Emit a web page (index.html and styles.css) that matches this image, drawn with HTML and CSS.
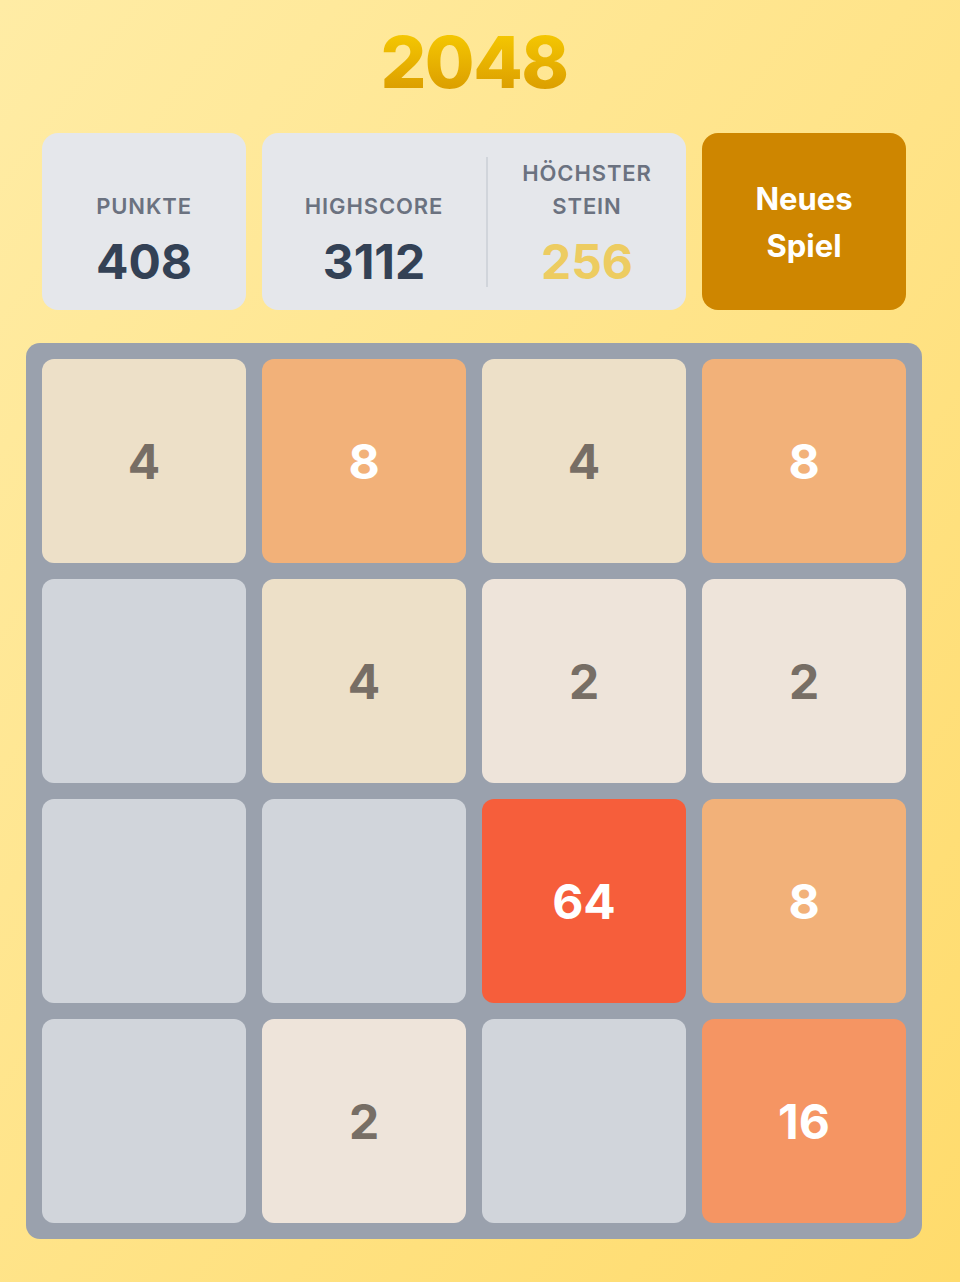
FILE: index.html
```html
<!DOCTYPE html>
<html lang="de">
<head>
    <meta charset="UTF-8">
    <meta name="viewport" content="width=device-width, initial-scale=1.0">
    <title>2048</title>
    <link rel="stylesheet" href="styles.css">
</head>
<body>
    <div class="game">
        <h1 class="title">2048</h1>

        <div class="stats">
            <div class="stat-box">
                <div class="stat">
                    <div class="stat-label">Punkte</div>
                    <div class="stat-value">408</div>
                </div>
            </div>

            <div class="stat-box stat-box-wide">
                <div class="stat">
                    <div class="stat-label">Highscore</div>
                    <div class="stat-value">3112</div>
                </div>
                <div class="divider"></div>
                <div class="stat">
                    <div class="stat-label">Höchster Stein</div>
                    <div class="stat-value best-tile">256</div>
                </div>
            </div>

            <button class="new-game" type="button">Neues Spiel</button>
        </div>

        <div class="board">
            <div class="tile t4">4</div>
            <div class="tile t8">8</div>
            <div class="tile t4">4</div>
            <div class="tile t8">8</div>

            <div class="tile"></div>
            <div class="tile t4">4</div>
            <div class="tile t2">2</div>
            <div class="tile t2">2</div>

            <div class="tile"></div>
            <div class="tile"></div>
            <div class="tile t64">64</div>
            <div class="tile t8">8</div>

            <div class="tile"></div>
            <div class="tile t2">2</div>
            <div class="tile"></div>
            <div class="tile t16">16</div>
        </div>
    </div>
</body>
</html>
```

FILE: styles.css
```css
html,
body {
    margin: 0;
    min-height: 100%;
}

body {
    min-height: 1282px;
    font-family: Inter, "Noto Sans", sans-serif;
    background: linear-gradient(to bottom right, #ffeca5, #ffdb6c);
}

.game {
    width: 896px;
    margin-left: 26px;
    padding-top: 26px;
}

.title {
    margin: 0 0 35px;
    font-size: 72px;
    line-height: 72px;
    font-weight: 800;
    letter-spacing: -1.5px;
    text-align: center;
    background: linear-gradient(to bottom, #f8cd02, #d89800);
    -webkit-background-clip: text;
    background-clip: text;
    color: transparent;
}

/* score row */
.stats {
    display: grid;
    grid-template-columns: 204px 424px 204px;
    gap: 16px;
    padding: 0 16px;
    height: 177px;
}

.stat-box {
    display: flex;
    align-items: center;
    justify-content: center;
    background: #e5e7eb;
    border-radius: 16px;
}

.stat-box-wide {
    display: grid;
    grid-template-columns: 224px 2px 1fr;
    align-items: center;
}

.stat {
    display: flex;
    flex-direction: column;
    align-items: center;
}

.stat-label {
    display: flex;
    align-items: flex-end;
    justify-content: center;
    min-height: 66px;
    width: 150px;
    font-size: 22px;
    line-height: 33px;
    font-weight: 600;
    letter-spacing: 0.04em;
    text-transform: uppercase;
    text-align: center;
    color: #6b7280;
}

.stat-value {
    margin-top: 15px;
    font-size: 48px;
    line-height: 48px;
    font-weight: 700;
    color: #334155;
}

.best-tile {
    color: #edcc61;
}

.divider {
    width: 2px;
    height: 130px;
    background: #d1d5db;
}

.new-game {
    padding: 0 24px;
    border: none;
    border-radius: 16px;
    background: #ce8600;
    color: #fff;
    font-family: inherit;
    font-size: 31px;
    line-height: 47px;
    font-weight: 700;
    cursor: pointer;
}

/* board */
.board {
    display: grid;
    grid-template-columns: repeat(4, 204px);
    grid-auto-rows: 204px;
    gap: 16px;
    margin-top: 33px;
    padding: 16px;
    background: #9aa1ad;
    border-radius: 14px;
}

.tile {
    display: flex;
    align-items: center;
    justify-content: center;
    border-radius: 12px;
    background: #d1d5db;
    font-size: 48px;
    font-weight: 700;
    color: #fff;
}

.t2 {
    background: #eee4da;
    color: #776e65;
}

.t4 {
    background: #ede0c8;
    color: #776e65;
}

.t8 {
    background: #f2b179;
}

.t16 {
    background: #f59563;
}

.t64 {
    background: #f65e3b;
}
```
